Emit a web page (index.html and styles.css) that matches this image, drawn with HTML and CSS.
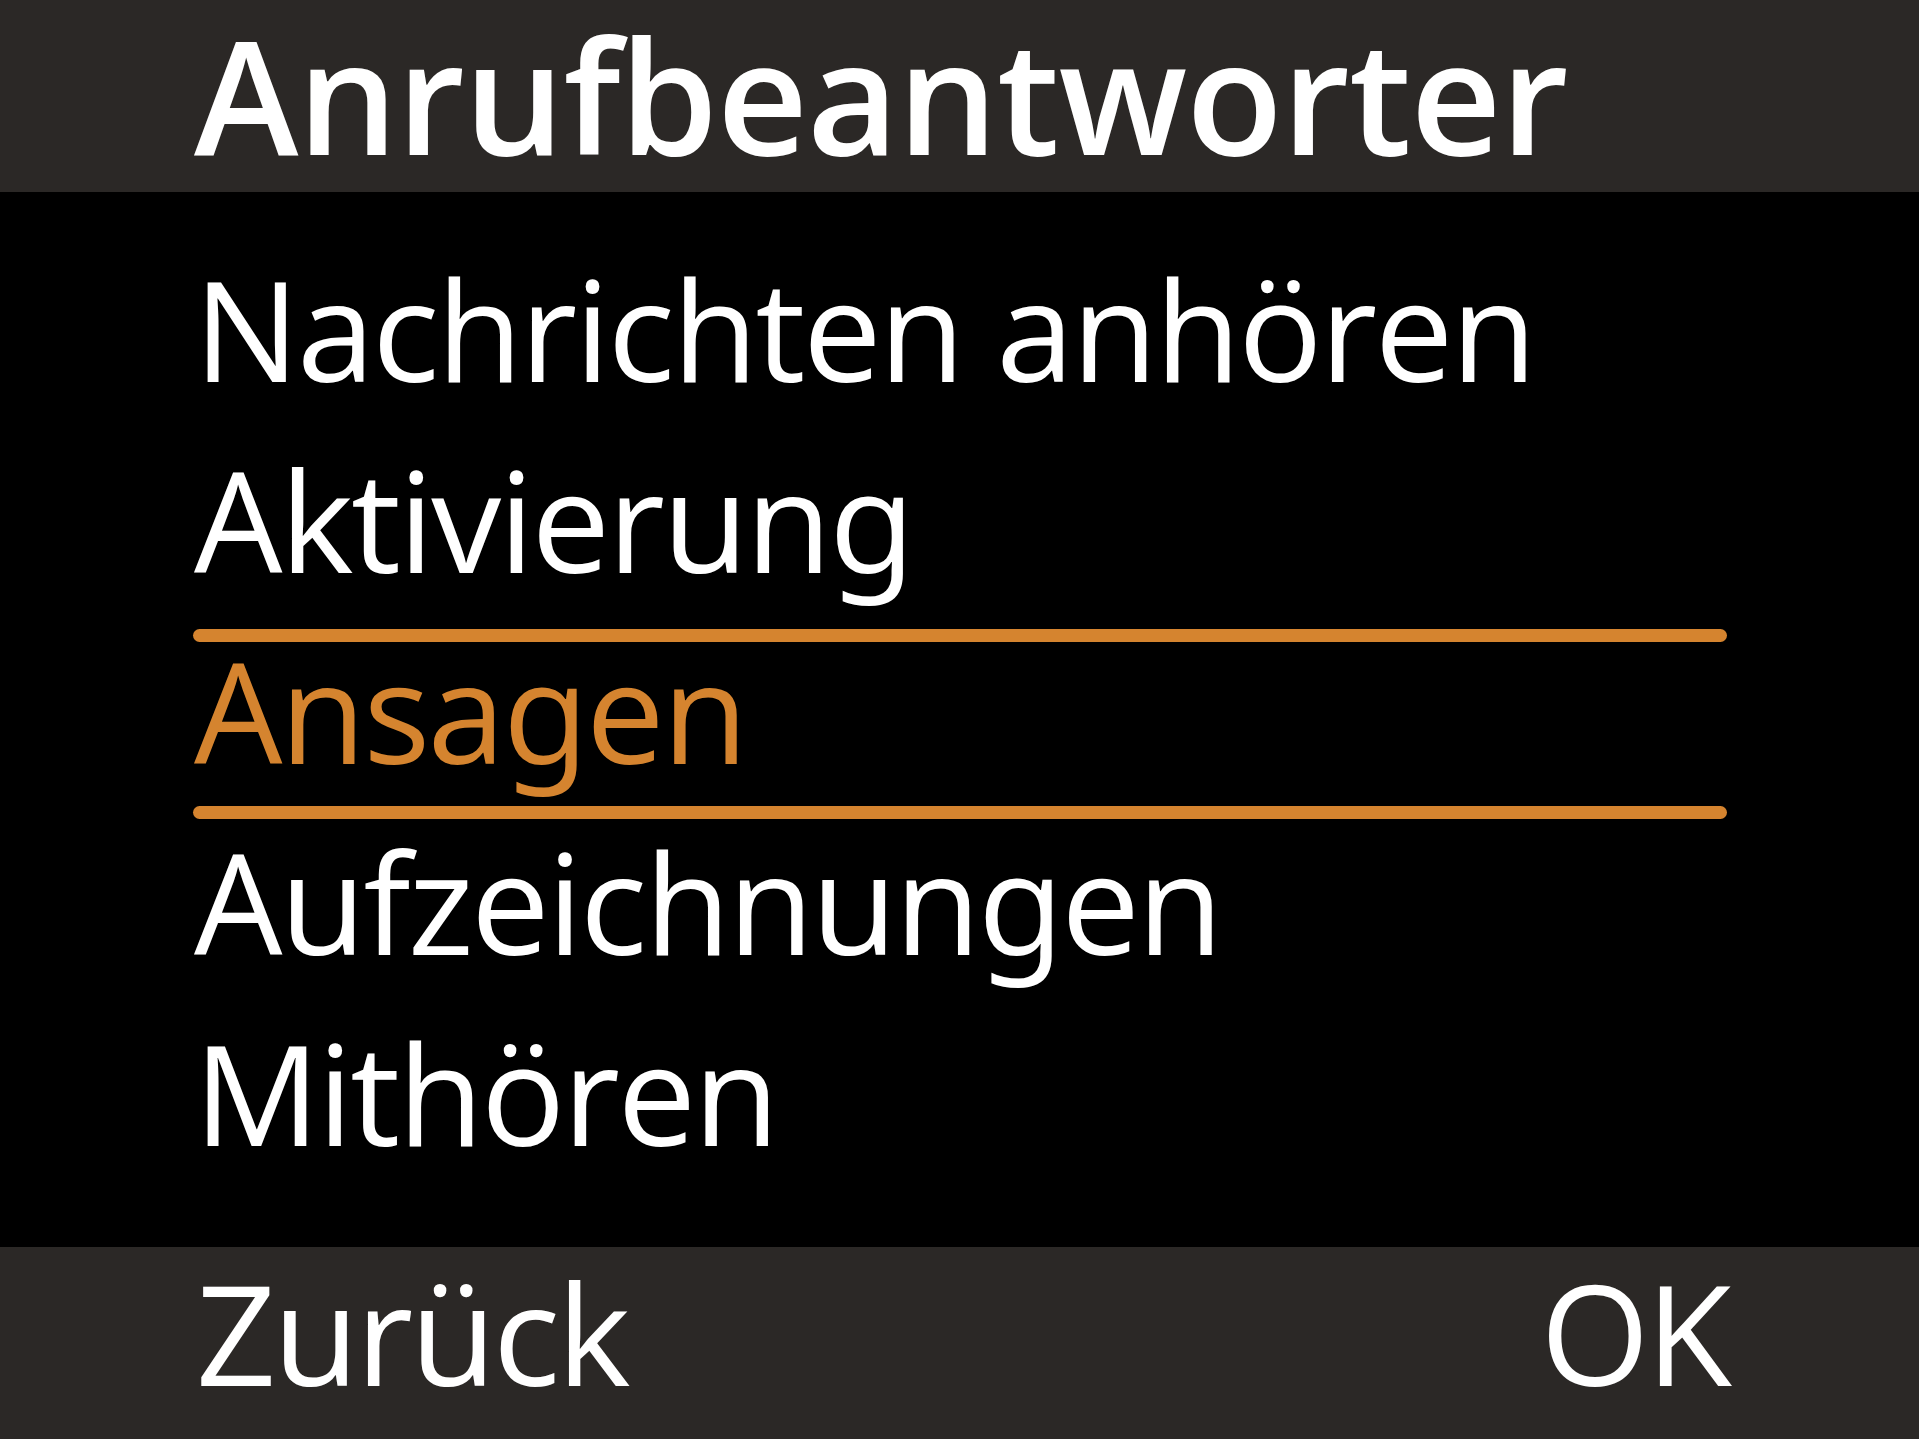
FILE: index.html
```
<!DOCTYPE html>
<html lang="de">
<head>
<meta charset="utf-8">
<title>Anrufbeantworter</title>
<link rel="stylesheet" href="styles.css">
</head>
<body>
<div class="screen">
  <header class="titlebar">
    <h1 class="title">Anrufbeantworter</h1>
  </header>
  <main class="content">
    <ul class="menu">
      <li class="item">Nachrichten anhören</li>
      <li class="item">Aktivierung</li>
      <li class="item selected">Ansagen</li>
      <li class="item">Aufzeichnungen</li>
      <li class="item">Mithören</li>
    </ul>
  </main>
  <footer class="softkeys">
    <span class="key">Zurück</span>
    <span class="key">OK</span>
  </footer>
</div>
</body>
</html>
```
FILE: styles.css
```
html, body {
  margin: 0;
  padding: 0;
  background: #000;
}

.screen {
  width: 1919px;
  height: 1439px;
  display: flex;
  flex-direction: column;
  background: #000;
  color: #fff;
  font-family: "Open Sans", "Noto Sans", sans-serif;
  font-feature-settings: "salt" 1;
  overflow: hidden;
}

.titlebar {
  height: 192px;
  flex: 0 0 192px;
  background: #2b2826;
  padding-left: 194px;
  box-sizing: border-box;
}

.title {
  margin: 0;
  font-size: 158px;
  font-weight: 600;
  line-height: 192px;
  margin-top: -2px;
  letter-spacing: -1px;
  white-space: nowrap;
}

.content {
  flex: 1 1 auto;
  padding-top: 40px;
  box-sizing: border-box;
}

.menu {
  list-style: none;
  margin: 0;
  padding: 0 192px 0 193px;
}

.item {
  position: relative;
  height: 191px;
  font-size: 140px;
  line-height: 191px;
  letter-spacing: -2.5px;
  padding-left: 1px;
  white-space: nowrap;
}

.item.selected {
  color: #d5842f;
}

.item.selected::before,
.item.selected::after {
  content: "";
  position: absolute;
  left: 0;
  right: 0;
  height: 13px;
  border-radius: 7px;
  background: #d5842f;
}

.item.selected::before {
  top: 15px;
}

.item.selected::after {
  top: 192px;
}

.softkeys {
  height: 192px;
  flex: 0 0 192px;
  background: #2b2826;
  display: flex;
  justify-content: space-between;
  padding: 0 190px 0 196px;
  box-sizing: border-box;
}

.key {
  font-size: 140px;
  line-height: 170px;
  letter-spacing: -3px;
  white-space: nowrap;
}
```
